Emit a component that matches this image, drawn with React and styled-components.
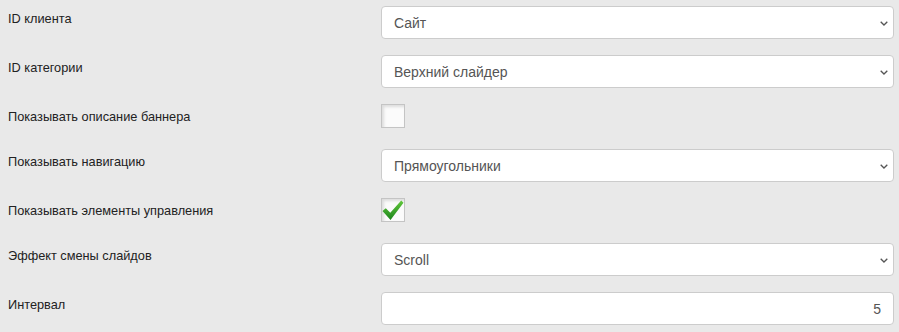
import React from 'react'
import styled, { createGlobalStyle } from 'styled-components'

const GlobalStyle = createGlobalStyle`
  html, body {
    margin: 0;
    background: #e9e9e9;
  }
  body {
    font-family: "Liberation Sans", Arial, sans-serif;
  }
`

const Form = styled.form`
  padding: 6px 5px 0 8px;
  display: flex;
  flex-direction: column;
  gap: 16px;
`

const Row = styled.div`
  display: grid;
  grid-template-columns: 373px 1fr;
  align-items: start;
`

const Label = styled.label`
  font-size: 12.75px;
  line-height: 15px;
  color: #222;
  padding-top: 5px;
`

const SelectBox = styled.div`
  position: relative;
  height: 33px;
`

const Select = styled.select`
  appearance: none;
  -webkit-appearance: none;
  width: 100%;
  height: 33px;
  box-sizing: border-box;
  margin: 0;
  padding: 0 30px 0 12px;
  border: 1px solid #ccc;
  border-radius: 4px;
  background: #fff;
  color: #555;
  font-family: "Liberation Sans", Arial, sans-serif;
  font-size: 14px;
  outline: none;
`

const Chevron = styled.svg`
  position: absolute;
  right: 6px;
  top: 15px;
  width: 8px;
  height: 5px;
  pointer-events: none;
`

const Input = styled.input`
  width: 100%;
  height: 33px;
  box-sizing: border-box;
  margin: 0;
  padding: 0 12px;
  border: 1px solid #ccc;
  border-radius: 4px;
  background: #fff;
  color: #555;
  text-align: ${p => (p.$right ? 'right' : 'left')};
  font-family: "Liberation Sans", Arial, sans-serif;
  font-size: 14px;
  outline: none;
`

const Check = styled.span`
  display: flex;
  align-items: center;
  justify-content: center;
  width: 24px;
  height: 24px;
  box-sizing: border-box;
  margin-bottom: 5px;
  border: 1px solid #c4c4c4;
  background: #fbfbfb;
  box-shadow: inset 2px 2px 3px rgba(0, 0, 0, 0.12);
`

function SelectField({ value, options }) {
  return (
    <SelectBox>
      <Select defaultValue={value}>
        {options.map(o => (
          <option key={o}>{o}</option>
        ))}
      </Select>
      <Chevron viewBox="0 0 8 5">
        <path d="M0.7 0.7 L4 4 L7.3 0.7" fill="none" stroke="#555" strokeWidth="1.3" />
      </Chevron>
    </SelectBox>
  )
}

function Checkbox({ checked }) {
  return (
    <Check>
      {checked && (
        <svg width="22" height="21" viewBox="0 0 22 21">
          <defs>
            <linearGradient id="tick" x1="0" y1="0" x2="0" y2="1">
              <stop offset="0" stopColor="#62c83c" />
              <stop offset="1" stopColor="#1c841c" />
            </linearGradient>
          </defs>
          <path
            d="M0.5 11 L3.8 8.2 L8.3 12.8 L19.2 0.5 L21.5 2.8 L8.5 20 Z"
            fill="url(#tick)"
          />
        </svg>
      )}
    </Check>
  )
}

const fields = [
  { label: 'ID клиента', type: 'select', value: 'Сайт', options: ['Сайт'] },
  { label: 'ID категории', type: 'select', value: 'Верхний слайдер', options: ['Верхний слайдер'] },
  { label: 'Показывать описание баннера', type: 'check', checked: false },
  { label: 'Показывать навигацию', type: 'select', value: 'Прямоугольники', options: ['Прямоугольники'] },
  { label: 'Показывать элементы управления', type: 'check', checked: true },
  { label: 'Эффект смены слайдов', type: 'select', value: 'Scroll', options: ['Scroll'] },
  { label: 'Интервал', type: 'input', value: '5' },
]

export default function App() {
  return (
    <>
      <GlobalStyle />
      <Form>
        {fields.map(f => (
          <Row key={f.label}>
            <Label>{f.label}</Label>
            {f.type === 'select' && <SelectField value={f.value} options={f.options} />}
            {f.type === 'check' && <Checkbox checked={f.checked} />}
            {f.type === 'input' && <Input $right defaultValue={f.value} />}
          </Row>
        ))}
      </Form>
    </>
  )
}
